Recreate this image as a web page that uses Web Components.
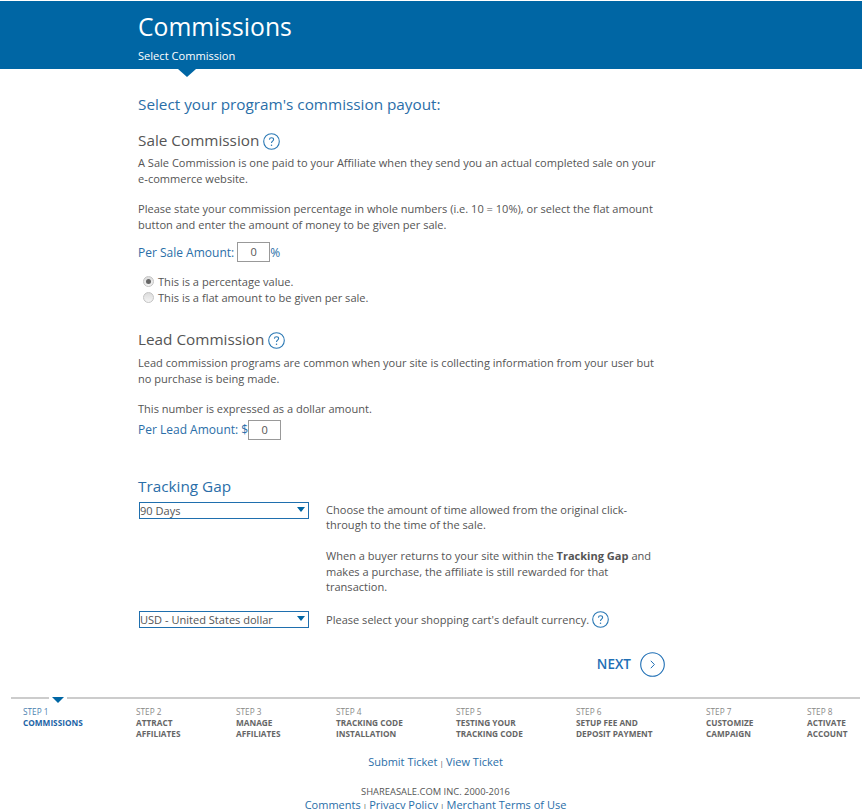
<!DOCTYPE html>
<html lang="en">
<head>
<meta charset="utf-8">
<title>Commissions</title>
<style>
  html, body { margin: 0; padding: 0; background: #fff; }
  body { font-family: "Open Sans", sans-serif; font-size: 11.05px; line-height: 15.6px; color: #555; height: 809px; overflow: hidden; }
</style>
</head>
<body>
<template id="t-header">
  <style>
    :host { display: block; margin-top: 1px; height: 68px; background: #0066a4; color: #fff; position: relative; padding-left: 138px; box-sizing: border-box; }
    h1 { margin: 0; padding-top: 8px; font-size: 24.7px; line-height: 35px; font-weight: 400; }
    p { margin: 0; padding-top: 4px; font-size: 11.1px; line-height: 16px; }
    :host::after { content: ""; position: absolute; left: 178px; top: 68px; border-style: solid; border-width: 8px 9px 0 9px; border-color: #0066a4 transparent transparent transparent; }
  </style>
  <h1><slot name="title"></slot></h1>
  <p><slot name="sub"></slot></p>
</template>

<template id="t-help">
  <style>
    :host { display: inline-block; width: 17px; height: 17px; vertical-align: -4px; }
    svg { display: block; }
  </style>
  <svg width="17" height="17" viewBox="0 0 17 17" fill="none">
    <circle cx="8.5" cy="8.5" r="7.8" stroke="#2a78b4" stroke-width="1.1"/>
    <path d="M6.4 6.6c.1-1.2 1-1.9 2.1-1.9 1.2 0 2.1.8 2.1 1.8 0 1.6-2.1 1.6-2.1 3.4" stroke="#2a78b4" stroke-width="1.1"/>
    <circle cx="8.5" cy="12.2" r=".75" fill="#2a78b4"/>
  </svg>
</template>

<template id="t-heading">
  <style>
    :host { display: block; font-size: 15.3px; line-height: 22px; color: #555; }
    :host([blue]) { color: #2a6ea8; }
  </style>
  <slot></slot>
</template>

<template id="t-field">
  <style>
    :host { display: flex; align-items: center; height: 20px; color: #2a6ea8; font-size: 12px; }
    .box { width: 31px; height: 18px; border: 1px solid #999; text-align: center; font-size: 11.05px; line-height: 18px; color: #555; }
  </style>
  <slot></slot><div class="box" part="box"><slot name="value"></slot></div><slot name="after"></slot>
</template>

<template id="t-radio">
  <style>
    :host { display: flex; align-items: center; height: 16px; padding-left: 5px; gap: 4px; font-size: 11.1px; color: #555; }
    .dot { width: 9px; height: 9px; border-radius: 50%; border: 1px solid #c4c4c4; background: linear-gradient(#dcdcdc, #f4f4f4); position: relative; flex: none; }
    :host([checked]) .dot::after { content: ""; position: absolute; left: 2px; top: 2px; width: 5px; height: 5px; border-radius: 50%; background: #666; }
  </style>
  <span class="dot"></span><slot></slot>
</template>

<template id="t-select">
  <style>
    :host { display: flex; align-items: center; justify-content: space-between; box-sizing: border-box; width: 170px; height: 17px; border: 1px solid #1f6fae; font-size: 11.05px; color: #555; padding: 0 3px 0 0; flex: none; }
    i { width: 0; height: 0; border-style: solid; border-width: 5px 4.5px 0 4.5px; border-color: #0066a4 transparent transparent transparent; margin-top: -2px; }
  </style>
  <span><slot></slot></span><i></i>
</template>

<template id="t-next">
  <style>
    :host { display: flex; align-items: center; justify-content: flex-end; gap: 9px; color: #1f6fb5; font-size: 13.5px; font-weight: 600; }
    svg { display: block; }
  </style>
  <slot></slot>
  <svg width="25" height="25" viewBox="0 0 25 25" fill="none" stroke="#1f6fb5">
    <circle cx="12.5" cy="12.5" r="11.8" stroke-width="1.1"/>
    <path d="M10.8 8.8l3.6 3.7-3.6 3.7" stroke-width="1"/>
  </svg>
</template>

<template id="t-stepper">
  <style>
    :host { display: grid; grid-template-columns: 113px 100px 100px 120px 120px 130px 101px 1fr; margin: 0 2px 0 11px; padding: 7px 0 0 12px; border-top: 2px solid #ccc; position: relative; }
    :host::before { content: ""; position: absolute; left: 38px; top: -2px; width: 18px; height: 2px; background: #fff; }
    :host::after { content: ""; position: absolute; left: 41px; top: -2px; border-style: solid; border-width: 6px 6px 0 6px; border-color: #0066a4 transparent transparent transparent; }
  </style>
  <slot></slot>
</template>

<template id="t-step">
  <style>
    :host { display: block; font-size: 8.25px; line-height: 11px; color: #888; }
    b { display: block; font-weight: 700; color: #666; text-transform: uppercase; }
    :host([current]) { color: #4a7fb0; }
    :host([current]) b { color: #1c64a6; }
  </style>
  <span><slot name="n"></slot></span>
  <b><slot></slot></b>
</template>

<template id="t-footer">
  <style>
    :host { display: block; text-align: center; color: #555; font-size: 9.4px; line-height: 13px; padding-left: 9px; }
    .links { font-size: 11px; line-height: 13px; color: #2a6ea8; }
    .tickets { margin-bottom: 14px; line-height: 16px; }
    small { font-size: 8px; color: #555; }
  </style>
  <div class="links tickets">Submit Ticket<small> | </small>View Ticket</div>
  <div>SHAREASALE.COM INC. 2000-2016</div>
  <div class="links">Comments<small> | </small>Privacy Policy<small> | </small>Merchant Terms of Use</div>
</template>

<template id="t-main">
  <style>
    :host { display: block; padding-left: 138px; width: 527px; }
    p { margin: 0; }
    .lead { font-size: 15.3px; line-height: 20px; color: #2a6ea8; padding-top: 25px; margin-bottom: 15px; }
    .gap { margin-top: 15px; }
    .row { display: flex; gap: 17px; }
    .row p { width: 336px; }
    .row b { font-weight: 700; }
  </style>
  <div class="lead">Select your program's commission payout:</div>

  <ss-heading>Sale Commission <ss-help></ss-help></ss-heading>
  <p style="margin-top:4px">A Sale Commission is one paid to your Affiliate when they send you an actual completed sale on your e&#8209;commerce website.</p>
  <p class="gap">Please state your commission percentage in whole numbers (i.e. 10 = 10%), or select the flat amount button and enter the amount of money to be given per sale.</p>
  <ss-field style="margin-top:10px"><span style="margin-right:3px">Per Sale Amount:</span><span slot="value">0</span><span slot="after">%</span></ss-field>
  <ss-radio checked style="margin-top:11px">This is a percentage value.</ss-radio>
  <ss-radio>This is a flat amount to be given per sale.</ss-radio>

  <ss-heading style="margin-top:23px">Lead Commission <ss-help></ss-help></ss-heading>
  <p style="margin-top:5px">Lead commission programs are common when your site is collecting information from your user but no purchase is being made.</p>
  <p class="gap" style="margin-top:14px">This number is expressed as a dollar amount.</p>
  <ss-field style="margin-top:4px"><span>Per Lead Amount: $</span><span slot="value">0</span></ss-field>

  <ss-heading blue style="margin-top:35px">Tracking Gap</ss-heading>
  <div class="row" style="margin-top:4.6px;padding-left:1px">
    <ss-select style="margin-top:.4px">90 Days</ss-select>
    <div>
      <p>Choose the amount of time allowed from the original click-through to the time of the sale.</p>
      <p class="gap">When a buyer returns to your site within the <b>Tracking Gap</b> and makes a purchase, the affiliate is still rewarded for that transaction.</p>
    </div>
  </div>
  <div class="row" style="margin-top:16.4px;padding-left:1px;align-items:center">
    <ss-select>USD - United States dollar</ss-select>
    <div>Please select your shopping cart's default currency. <ss-help></ss-help></div>
  </div>
  <ss-next style="margin-top:24px">NEXT</ss-next>
</template>

<ss-header><span slot="title">Commissions</span><span slot="sub">Select Commission</span></ss-header>
<ss-main></ss-main>
<ss-stepper style="margin-top:20px">
  <ss-step current><span slot="n">STEP 1</span>Commissions</ss-step>
  <ss-step><span slot="n">STEP 2</span>Attract<br>Affiliates</ss-step>
  <ss-step><span slot="n">STEP 3</span>Manage<br>Affiliates</ss-step>
  <ss-step><span slot="n">STEP 4</span>Tracking Code<br>Installation</ss-step>
  <ss-step><span slot="n">STEP 5</span>Testing Your<br>Tracking Code</ss-step>
  <ss-step><span slot="n">STEP 6</span>Setup Fee and<br>Deposit Payment</ss-step>
  <ss-step><span slot="n">STEP 7</span>Customize<br>Campaign</ss-step>
  <ss-step><span slot="n">STEP 8</span>Activate<br>Account</ss-step>
</ss-stepper>
<ss-footer style="margin-top:15px"></ss-footer>

<script>
  // every element is just a template stamped into an open shadow root
  const tags = {
    'ss-header': 't-header', 'ss-help': 't-help', 'ss-heading': 't-heading',
    'ss-field': 't-field', 'ss-radio': 't-radio', 'ss-select': 't-select',
    'ss-next': 't-next', 'ss-stepper': 't-stepper', 'ss-step': 't-step',
    'ss-footer': 't-footer', 'ss-main': 't-main'
  };
  for (const [tag, id] of Object.entries(tags)) {
    customElements.define(tag, class extends HTMLElement {
      constructor() {
        super();
        this.attachShadow({ mode: 'open' });
        this.shadowRoot.appendChild(document.getElementById(id).content.cloneNode(true));
      }
    });
  }
</script>
</body>
</html>
